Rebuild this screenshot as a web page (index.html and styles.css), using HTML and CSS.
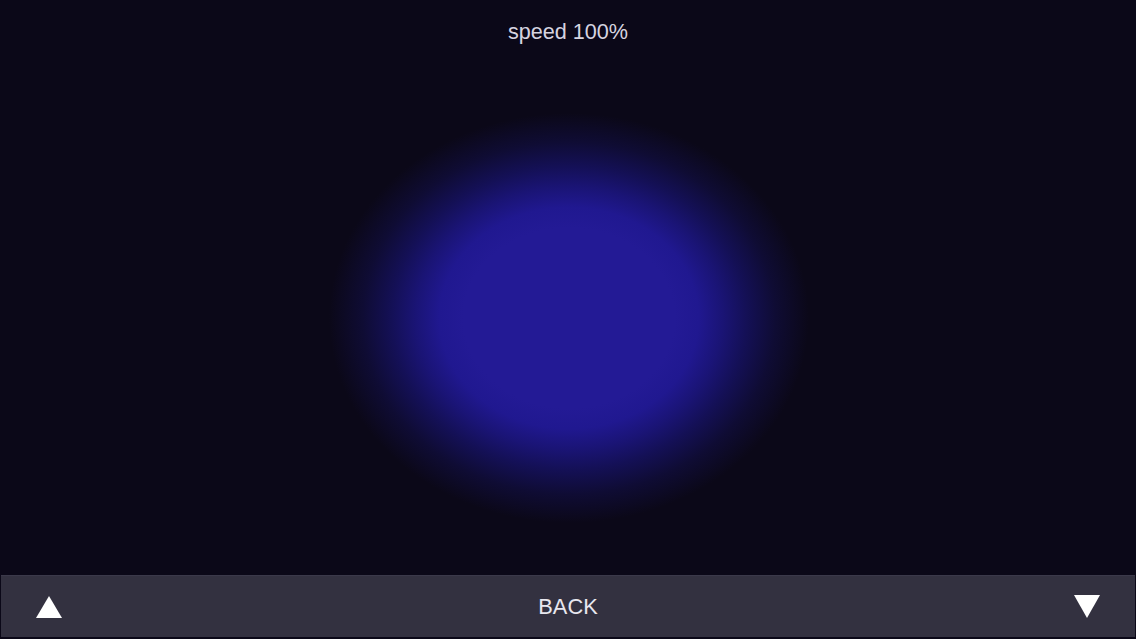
FILE: index.html
```html
<!DOCTYPE html>
<html>
<head>
<meta charset="utf-8">
<link rel="stylesheet" href="styles.css">
</head>
<body>
<div class="screen">
  <main class="stage">
    <div class="speed">speed 100%</div>
  </main>
  <nav class="bar">
    <button class="arrow" aria-label="up">
      <svg width="28" height="24" viewBox="0 0 28 24"><polygon points="14,1 27,23 1,23" fill="#ffffff"/></svg>
    </button>
    <button class="back">BACK</button>
    <button class="arrow" aria-label="down">
      <svg width="28" height="25" viewBox="0 0 28 25"><polygon points="1,1 27,1 14,24" fill="#ffffff"/></svg>
    </button>
  </nav>
</div>
</body>
</html>
```
FILE: styles.css
```css
html, body {
  margin: 0;
  padding: 0;
  width: 1136px;
  height: 639px;
  overflow: hidden;
  background: #0b0818;
  font-family: "Liberation Sans", Arial, sans-serif;
}
.screen {
  display: flex;
  flex-direction: column;
  width: 1136px;
  height: 639px;
}
.stage {
  flex: 1;
  display: flex;
  justify-content: center;
  align-items: flex-start;
  background:
    radial-gradient(ellipse 240px 205px at 569px 318px,
      #231a95 0%,
      #231a95 44%,
      #201890 54%,
      #1a1475 64%,
      #141056 74%,
      #0f0c34 86%,
      rgba(11,8,24,0) 100%),
    #0b0818;
}
.speed {
  margin-top: 20px;
  color: #d6d4e0;
  font-size: 21.6px;
  line-height: 24px;
}
.bar {
  height: 61px;
  margin: 0 1px 2px 1px;
  background: #333140;
  border-top: 1px solid #3b394a;
  display: flex;
  align-items: center;
  justify-content: space-between;
  padding: 0 34px 0 34px;
}
.arrow {
  background: none;
  border: 0;
  padding: 0;
  width: 28px;
  height: 25px;
  display: flex;
  align-items: center;
  justify-content: center;
}
.back {
  background: none;
  border: 0;
  padding: 0;
  color: #e8e7ef;
  font-family: "Liberation Sans", Arial, sans-serif;
  font-size: 21.8px;
  line-height: 24px;
}
```
